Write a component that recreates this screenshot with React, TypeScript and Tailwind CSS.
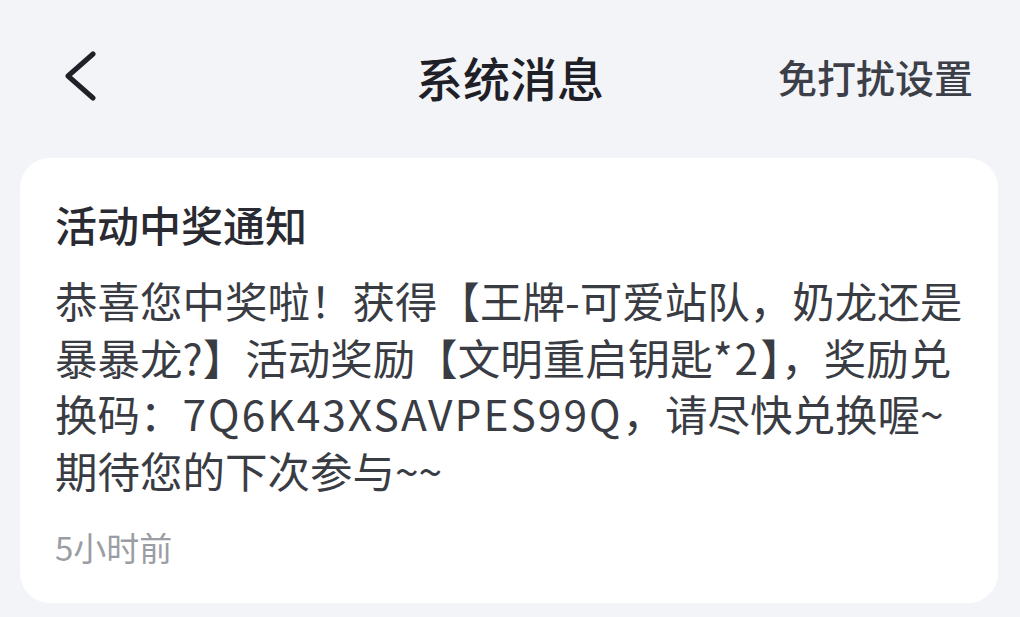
import React from 'react';

const CJK = { fontFamily: '"Noto Sans CJK SC", "Noto Sans", sans-serif' };

// Back chevron in the header.
const BackIcon: React.FC = () => (
  <svg width="34" height="50" viewBox="0 0 34 50" fill="none">
    <polyline
      points="29,3 4,25 29,47"
      stroke="#1f2128"
      strokeWidth="5"
      strokeLinecap="round"
      strokeLinejoin="round"
    />
  </svg>
);

// Latin runs in the reference font are wider, so space them out a touch.
const Latin: React.FC<{ children: React.ReactNode }> = ({ children }) => (
  <span className="tracking-[2px]">{children}</span>
);

export default function App() {
  return (
    <div className="h-[617px] w-full overflow-hidden bg-[#f2f4f8]" style={CJK}>
      {/* Header */}
      <div className="grid h-[152px] grid-cols-[1fr_auto_1fr] items-center">
        <div className="flex items-center pl-[64px]">
          <BackIcon />
        </div>
        <h1 className="text-[47px] leading-none font-medium text-[#1f2027]">系统消息</h1>
        <div className="flex justify-end pr-[47px]">
          <span className="text-[39px] leading-none font-medium text-[#3c3f48]">免打扰设置</span>
        </div>
      </div>

      {/* Message card */}
      <div className="mt-[6px] ml-[20px] w-[978px] rounded-[30px] bg-white pt-[38px] pr-[30px] pb-[36px] pl-[35px]">
        <div className="text-[42px] leading-[56px] font-medium text-[#2a2b32]">活动中奖通知</div>
        <div className="mt-[20px] text-[42.5px] leading-[56.5px] whitespace-nowrap text-[#3a3c44]">
          <div>恭喜您中奖啦！获得【王牌-可爱站队，奶龙还是</div>
          <div>
            暴暴龙?】活动奖励【文明重启钥匙<Latin>*2</Latin>】，奖励兑
          </div>
          <div>
            换码：<Latin>7Q6K43XSAVPES99Q</Latin>，请尽快兑换喔~
          </div>
          <div>期待您的下次参与~~</div>
        </div>
        <div className="mt-[29px] text-[33px] leading-[40px] text-[#9b9da4]">5小时前</div>
      </div>
    </div>
  );
}
